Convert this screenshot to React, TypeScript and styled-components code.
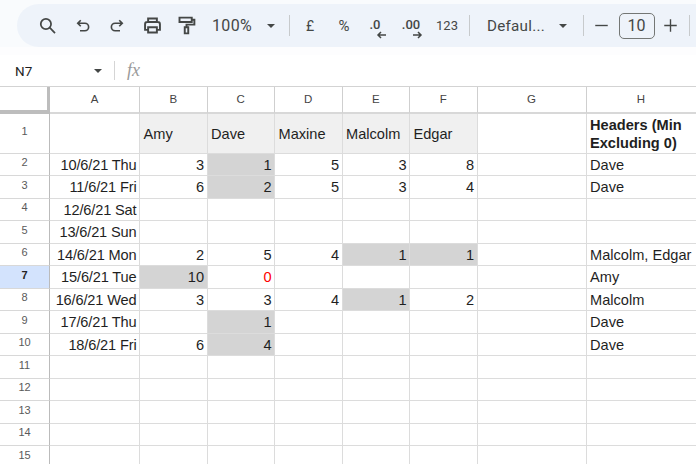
import React, { FunctionComponent, ReactNode } from 'react'
import styled, { createGlobalStyle } from 'styled-components'

const Global = createGlobalStyle`
  html, body { margin: 0; padding: 0; background: #fff; overflow: hidden; }
  body { font-family: 'Liberation Sans', Arial, sans-serif; }
`

const Page = styled('div')`
  width: 696px;
  height: 464px;
  overflow: hidden;
  background: #fff;
  display: flex;
  flex-direction: column;
`

const ToolbarZone = styled('div')`
  height: 55px;
  flex: none;
  box-sizing: border-box;
  padding: 4px 0 8px 17px;
  background: linear-gradient(#f9fbfd 0, #f9fbfd 47px, #fdfdfe 47px);
`

const Toolbar = styled('div')`
  height: 43px;
  width: 720px;
  box-sizing: border-box;
  padding-left: 12px;
  background: #eef3fa;
  border-radius: 22px 0 0 22px;
  display: flex;
  align-items: center;
  color: #444746;
`

const ToolSlot = styled('span')<{ $w: number; $down?: number }>`
  width: ${p => p.$w}px;
  flex: none;
  height: 24px;
  display: flex;
  align-items: center;
  justify-content: center;
  padding-top: ${p => p.$down || 0}px;
  box-sizing: content-box;
  font-size: 16px;
  letter-spacing: 0.3px;
  color: #444746;
  font-family: 'Roboto', sans-serif;
`

const SmallSlot = styled(ToolSlot)<{ $size?: number }>`
  font-size: ${p => p.$size || 13}px;
  letter-spacing: 0;
`

const FontName = styled(ToolSlot)`
  box-sizing: border-box;
  justify-content: flex-start;
  padding-left: 17.5px;
  font-size: 15.2px;
  letter-spacing: 0.25px;
`

const DecimalSlot = styled(ToolSlot)`
  flex-direction: column;
  font-size: 13px;
  font-weight: 500;
  letter-spacing: 0;
  line-height: 13px;
  height: 24px;
  padding-top: 5px;
`

const ArrowMark = styled('svg')`
  display: block;
  align-self: center;
  margin-left: 12px;
`

const ToolDivider = styled('span')<{ $ml?: number }>`
  width: 1px;
  height: 21px;
  flex: none;
  margin-left: ${p => p.$ml || 0}px;
  background: #c7cacc;
`

const Caret = styled('span')`
  width: 0;
  height: 0;
  flex: none;
  border-left: 4px solid transparent;
  border-right: 4px solid transparent;
  border-top: 4px solid #444746;
`

const FontSizeBox = styled('span')`
  width: 36px;
  height: 26px;
  flex: none;
  box-sizing: border-box;
  border: 1px solid #747775;
  border-radius: 5px;
  display: flex;
  align-items: center;
  justify-content: center;
  font-size: 16px;
  font-family: 'Roboto', sans-serif;
  color: #444746;
`

const FormulaBar = styled('div')`
  height: 31px;
  flex: none;
  display: flex;
  align-items: center;
  font-size: 12px;
  color: #1f1f1f;
`

const NameBox = styled('span')`
  width: 102px;
  flex: none;
  box-sizing: border-box;
  padding-left: 15px;
  display: flex;
  align-items: center;
  justify-content: space-between;
  font-family: 'Roboto', sans-serif;
  font-size: 13.5px;
`

const FxDivider = styled('span')`
  width: 1px;
  height: 19px;
  margin: 0 12px;
  background: #d5d5d5;
`

const FxMark = styled('span')`
  font-family: 'Liberation Serif', serif;
  font-style: italic;
  font-size: 18px;
  color: #9a9a9a;
`

const Sheet = styled('div')`
  display: grid;
  grid-template-columns: 50px 90px 67.5px 67.5px 67.5px 67.5px 67.5px 109px 110px;
  grid-template-rows: 26.5px 40px repeat(15, 22.5px);
  border-top: 1px solid #d3d3d3;
  flex: none;
  font-size: 14.6px;
  color: #1f1f1f;
`

const Corner = styled('div')`
  box-sizing: border-box;
  background: #fff;
  border-right: 3px solid #bdbdbd;
  border-bottom: 4px solid #bdbdbd;
`

const ColHead = styled('div')`
  box-sizing: border-box;
  border-right: 1px solid #cfcfcf;
  border-bottom: 2px solid #d8d8d8;
  display: flex;
  align-items: center;
  justify-content: center;
  font-size: 11.5px;
  color: #444;
`

const RowHead = styled('div')<{ $active?: boolean }>`
  box-sizing: border-box;
  background: ${p => (p.$active ? '#d3e3fd' : '#fff')};
  border-right: 1px solid #bbb;
  border-bottom: 1px solid #d8d8d8;
  display: flex;
  align-items: center;
  justify-content: center;
  padding-bottom: 4px;
  font-size: 11px;
  font-weight: ${p => (p.$active ? 700 : 400)};
  color: ${p => (p.$active ? '#222' : '#5a5a5a')};
`

const Cell = styled('div')<{ $fill?: 'head' | 'min'; $right?: boolean; $red?: boolean; $bold?: boolean }>`
  box-sizing: border-box;
  padding: 1px 2.5px 0 3.5px;
  display: flex;
  align-items: center;
  justify-content: ${p => (p.$right ? 'flex-end' : 'flex-start')};
  background: ${p => (p.$fill === 'head' ? '#f0f0f0' : p.$fill === 'min' ? '#d4d4d4' : '#fff')};
  border-right: 1px solid #dcdcdc;
  border-bottom: 1px solid #dcdcdc;
  color: ${p => (p.$red ? '#ff0000' : '#1f1f1f')};
  font-weight: ${p => (p.$bold ? 700 : 400)};
  line-height: 18px;
  white-space: nowrap;
`

const DateCell = styled(Cell)`
  letter-spacing: -0.15px;
`

const HeadText = styled('span')`
  white-space: normal;
`

const Icon: FunctionComponent<{ children: ReactNode; size?: number; weight?: number }> = ({ children, size = 20, weight = 2.2 }) => (
  <svg width={size} height={size} viewBox="0 0 24 24" fill="none" stroke="#444746" strokeWidth={weight}>
    {children}
  </svg>
)

const LeftArrow = () => (
  <ArrowMark width="11" height="8" viewBox="0 0 11 8" fill="none" stroke="#444746" strokeWidth="1.5">
    <path d="M10 4H2M5 1 2 4l3 3" />
  </ArrowMark>
)

const RightArrow = () => (
  <ArrowMark width="11" height="8" viewBox="0 0 11 8" fill="none" stroke="#444746" strokeWidth="1.5">
    <path d="M1 4h8M6 1l3 3-3 3" />
  </ArrowMark>
)

const columns = ['A', 'B', 'C', 'D', 'E', 'F', 'G', 'H']
const names = ['', 'Amy', 'Dave', 'Maxine', 'Malcolm', 'Edgar']

type Row = { date?: string; values?: (number | null)[]; result?: string }
const rows: Row[] = [
  { date: '10/6/21 Thu', values: [3, 1, 5, 3, 8], result: 'Dave' },
  { date: '11/6/21 Fri', values: [6, 2, 5, 3, 4], result: 'Dave' },
  { date: '12/6/21 Sat' },
  { date: '13/6/21 Sun' },
  { date: '14/6/21 Mon', values: [2, 5, 4, 1, 1], result: 'Malcolm, Edgar' },
  { date: '15/6/21 Tue', values: [10, 0, null, null, null], result: 'Amy' },
  { date: '16/6/21 Wed', values: [3, 3, 4, 1, 2], result: 'Malcolm' },
  { date: '17/6/21 Thu', values: [null, 1, null, null, null], result: 'Dave' },
  { date: '18/6/21 Fri', values: [6, 4, null, null, null], result: 'Dave' },
  {},
  {},
  {},
  {},
  {},
]

// which cells carry the grey "minimum" fill
const isMin = (v: number | null | undefined, vals?: (number | null)[]) => {
  if (!vals || v == null || v === 0) return false
  const nonZero = vals.filter((x): x is number => x != null && x !== 0)
  return v === Math.min(...nonZero)
}

const App: FunctionComponent = () => (
  <Page>
    <Global />
    <ToolbarZone>
      <Toolbar>
        <ToolSlot $w={36}>
          <Icon size={19}><circle cx="10" cy="10" r="6.500" /><path d="M14.500 14.500 21.500 21.500" /></Icon>
        </ToolSlot>
        <ToolSlot $w={36} $down={3}>
          <Icon size={18}><path d="M9 3 5 7l4 4M5 7h9.500a5 5 0 0 1 0 10H8" /></Icon>
        </ToolSlot>
        <ToolSlot $w={32} $down={3}>
          <Icon size={18}><path d="m15 3 4 4-4 4M19 7H9.500a5 5 0 0 0 0 10H16" /></Icon>
        </ToolSlot>
        <ToolSlot $w={38}>
          <Icon size={21}>
            <path d="M7 8V4h10v4M7 17H3.500v-6.500A2.500 2.500 0 0 1 6 8h12a2.500 2.500 0 0 1 2.500 2.500V17H17" />
            <path d="M7 14h10v6H7z" />
          </Icon>
        </ToolSlot>
        <ToolSlot $w={30}>
          <Icon size={21}>
            <path d="M4 3h14v5H4zM18 5.500h3v5.500h-9v3M10 14h4v7h-4z" />
          </Icon>
        </ToolSlot>
        <ToolSlot $w={62}>100%</ToolSlot>
        <ToolSlot $w={16}><Caret /></ToolSlot>
        <ToolDivider $ml={9.5} />
        <SmallSlot $w={41} $size={14}>£</SmallSlot>
        <SmallSlot $w={27} $size={15}>%</SmallSlot>
        <DecimalSlot $w={35}>.0<LeftArrow /></DecimalSlot>
        <DecimalSlot $w={37}>.00<RightArrow /></DecimalSlot>
        <SmallSlot $w={35}>123</SmallSlot>
        <ToolDivider $ml={4} />
        <FontName $w={84}>Defaul...</FontName>
        <ToolSlot $w={19}><Caret /></ToolSlot>
        <ToolDivider $ml={10} />
        <ToolSlot $w={35}>
          <Icon size={15}><path d="M2 12h20" /></Icon>
        </ToolSlot>
        <FontSizeBox>10</FontSizeBox>
        <ToolSlot $w={31}>
          <Icon size={15}><path d="M2 12h20M12 2v20" /></Icon>
        </ToolSlot>
        <ToolDivider $ml={3} />
      </Toolbar>
    </ToolbarZone>
    <FormulaBar>
      <NameBox>N7<Caret /></NameBox>
      <FxDivider />
      <FxMark>fx</FxMark>
    </FormulaBar>
    <Sheet>
      <Corner />
      {columns.map(c => <ColHead key={c}>{c}</ColHead>)}
      <RowHead>1</RowHead>
      {names.map((n, i) => <Cell key={i} $fill={i > 0 ? 'head' : undefined}><HeadText>{n}</HeadText></Cell>)}
      <Cell />
      <Cell $bold><HeadText>Headers (Min Excluding 0)</HeadText></Cell>
      {rows.map((r, i) => (
        <React.Fragment key={i}>
          <RowHead $active={i === 5}>{i + 2}</RowHead>
          <DateCell $right>{r.date}</DateCell>
          {[0, 1, 2, 3, 4].map(j => {
            const v = r.values ? r.values[j] : null
            return (
              <Cell key={j} $right $red={v === 0} $fill={isMin(v, r.values) ? 'min' : undefined}>{v}</Cell>
            )
          })}
          <Cell />
          <Cell>{r.result}</Cell>
        </React.Fragment>
      ))}
    </Sheet>
  </Page>
)

export default App
